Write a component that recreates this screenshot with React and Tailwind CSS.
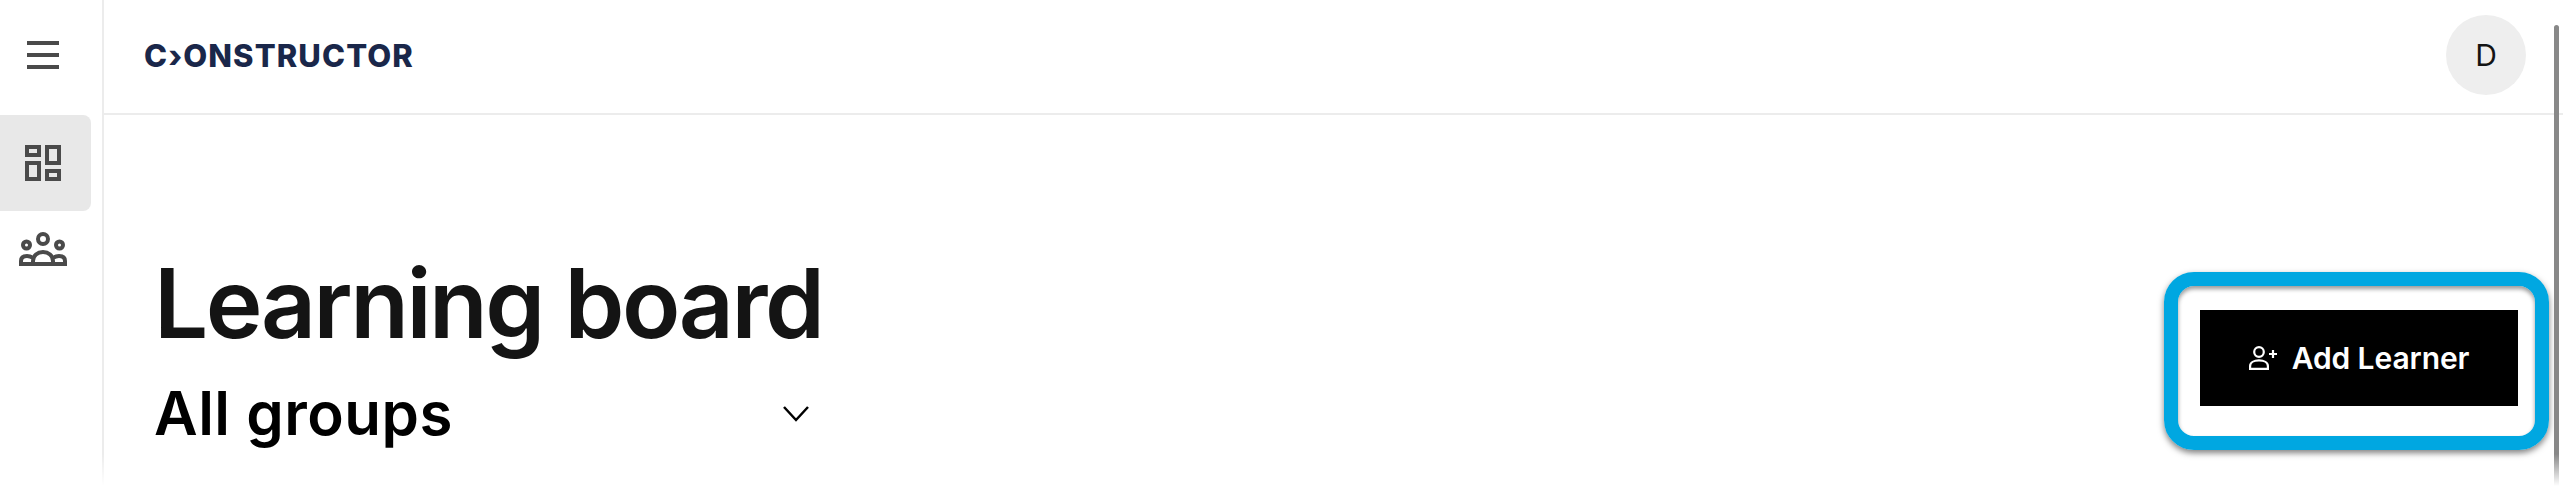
import React from "react";

const Hamburger = () => (
  <svg width="32" height="28" viewBox="0 0 32 28" fill="#4a4a4a"><rect x="0" y="0" width="32" height="4" /><rect x="0" y="12" width="32" height="4" /><rect x="0" y="24" width="32" height="4" /></svg>
);
const Dashboard = () => (
  <svg width="36" height="36" viewBox="0 0 36 36" fill="none" stroke="#4a4a4a" strokeWidth="4">
    <rect x="2" y="2" width="12" height="8" /><rect x="22" y="2" width="12" height="16" /><rect x="2" y="18" width="12" height="16" /><rect x="22" y="26" width="12" height="8" />
  </svg>
);
const Groups = () => (
  <svg width="48" height="34" viewBox="0 0 48 34" fill="none" stroke="#4a4a4a" strokeWidth="4">
    <circle cx="24" cy="7" r="5" /><circle cx="7.500" cy="13" r="3.500" /><circle cx="40.500" cy="13" r="3.500" />
    <path d="M14 32v-3c0-5.500 4.500-9 10-9s10 3.500 10 9v3" />
    <path d="M2 32v-3c0-3.500 2.500-5 6-5 2 0 4 .5 6 2M46 32v-3c0-3.500-2.500-5-6-5-2 0-4 .5-6 2" />
    <path d="M0 32h48" />
  </svg>
);
const AddPerson = () => (
  <svg width="28" height="24" viewBox="0 0 28 24" fill="none" stroke="#fff" strokeWidth="2.200">
    <circle cx="10" cy="6" r="4.800" /><path d="M1.100 22.900v-3c0-3.500 4-5.500 8.900-5.500s8.900 2 8.900 5.500v3z" /><path d="M20 8h8M24 4v8" />
  </svg>
);

export default function App() {
  return (
    <div className="relative flex h-[486px] w-full overflow-hidden bg-white" style={{ fontFamily: "Inter, sans-serif" }}>
      <aside className="flex h-full w-[104px] shrink-0 flex-col border-r-2 border-[#ececec]">
        <div className="flex h-[115px] items-center justify-center pr-[16px] pb-[5px]"><Hamburger /></div>
        <div className="flex h-[96px] w-[91px] items-center justify-center rounded-r-lg bg-[#e8e8e8] pr-[5px]"><Dashboard /></div>
        <div className="flex h-[58px] w-[86px] items-start justify-center pt-[21px]"><Groups /></div>
      </aside>
      <div className="flex min-w-0 flex-1 flex-col">
        <header className="flex h-[115px] shrink-0 items-center justify-between border-b-2 border-[#ececec] pb-[3px] pl-[40px] pr-[37px]">
          <span className="text-[31px] leading-none font-extrabold tracking-[1.1px] text-[#1a274a]">C›ONSTRUCTOR</span>
          <div className="flex h-[80px] w-[80px] items-center justify-center rounded-full bg-[#eeeeee] text-[30px] text-[#141414]">D</div>
        </header>
        <main className="flex flex-1 items-start justify-between pl-[50px] pr-[45px] pt-[132px]">
          <div className="w-[655px]">
            <h1 className="whitespace-nowrap text-[96px] leading-[112px] font-semibold tracking-[-2.5px] text-[#141414]">Learning board</h1>
            <div className="mt-[20px] flex items-center justify-between">
              <span className="text-[60px] leading-[68px] font-semibold tracking-[0.5px] text-black">All groups</span>
              <svg className="mt-[2px]" width="26" height="18" viewBox="0 0 26 18" fill="none" stroke="#000" strokeWidth="2.500"><path d="M1 2l12 13 12-13" /></svg>
            </div>
          </div>
          <button className="mt-[63px] flex h-[96px] w-[318px] items-center justify-center gap-[15px] bg-black text-[30px] font-semibold tracking-[-0.1px] text-white">
            <AddPerson />Add Learner
          </button>
        </main>
      </div>
      <div className="pointer-events-none absolute left-[2164px] top-[272px] h-[178px] w-[385px] rounded-[30px] border-[14px] border-[#00a7e1] shadow-[0_3px_6px_rgba(0,0,0,0.5),inset_0_3px_4px_rgba(0,0,0,0.4)]" />
      <div className="absolute left-[2554px] top-[25px] h-[461px] w-[5px] rounded-t-sm bg-[#888888]" />
      <div className="pointer-events-none absolute inset-x-0 bottom-0 h-[32px] bg-linear-to-b from-transparent to-white" />
    </div>
  );
}
